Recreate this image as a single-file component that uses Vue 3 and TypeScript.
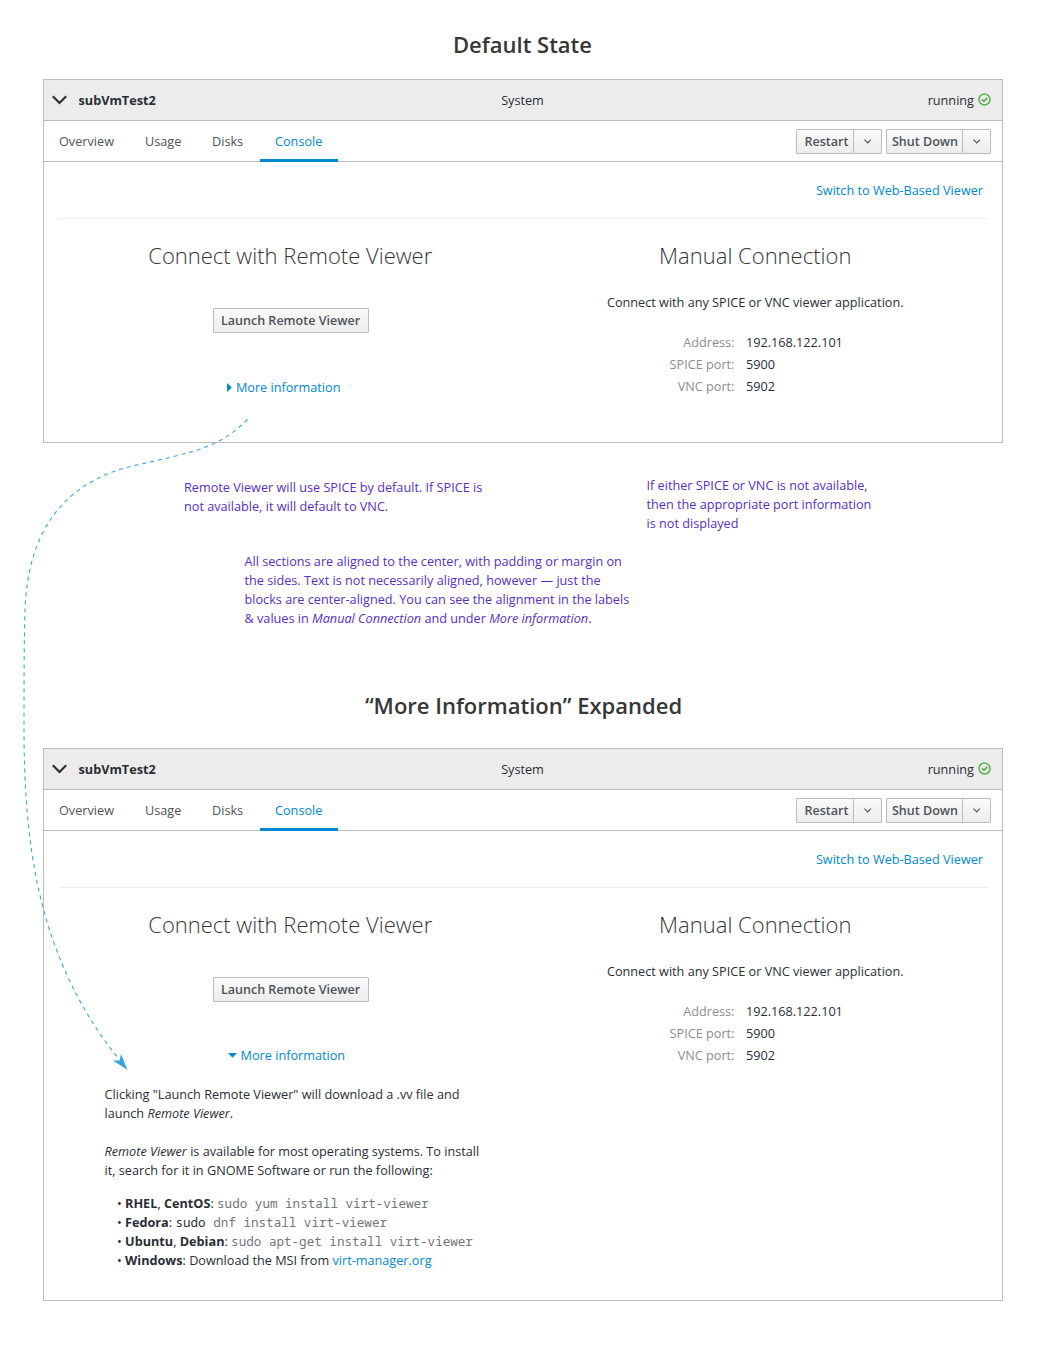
<script setup lang="ts">
interface VmPanel {
  id: string
  title: string
  expanded: boolean
}

const panels: VmPanel[] = [
  { id: 'default', title: 'Default State', expanded: false },
  { id: 'expanded', title: '“More Information” Expanded', expanded: true },
]

const tabs: string[] = ['Overview', 'Usage', 'Disks', 'Console']
const activeTab = 'Console'

const actions: string[] = ['Restart', 'Shut Down']

const connection: { label: string; value: string }[] = [
  { label: 'Address:', value: '192.168.122.101' },
  { label: 'SPICE port:', value: '5900' },
  { label: 'VNC port:', value: '5902' },
]
</script>

<template>
  <main class="page">
    <template v-for="panel in panels" :key="panel.id">
      <h1 class="state-title" :class="panel.id">{{ panel.title }}</h1>
      <section class="vm" :class="panel.id">
        <header class="vm-header">
          <div class="vm-name">
            <svg class="chevron" width="16" height="10" viewBox="0 0 16 10">
              <path d="M.8 1.300 7.500 8l6.700-6.700" fill="none" stroke="#292e34" stroke-width="2.1" />
            </svg>
            <strong>subVmTest2</strong>
          </div>
          <span class="vm-kind">System</span>
          <div class="vm-status">
            <span>running</span>
            <svg width="13" height="13" viewBox="0 0 13 13">
              <circle cx="6.5" cy="6.5" r="5.5" fill="none" stroke="#5cb050" stroke-width="1.5" />
              <path d="M3.9 6.3 5.9 8.3 9.2 5" fill="none" stroke="#5cb050" stroke-width="1.8" />
            </svg>
          </div>
        </header>

        <nav class="tabs">
          <a v-for="tab in tabs" :key="tab" class="tab" :class="['tab-' + tab.toLowerCase(), { active: tab === activeTab }]">{{ tab }}</a>
          <div class="actions">
            <div v-for="action in actions" :key="action" class="split">
              <button class="btn" :class="{ wide: action === 'Shut Down' }">{{ action }}</button>
              <button class="btn caret">
                <svg width="8" height="5" viewBox="0 0 8 5">
                  <path d="M.5.6 3.700 3.900 6.900.6" fill="none" stroke="#4d5258" stroke-width="1.1" />
                </svg>
              </button>
            </div>
          </div>
        </nav>

        <div class="console">
          <div class="switch"><a class="link">Switch to Web-Based Viewer</a></div>
          <div class="columns">
            <div class="column remote">
              <h2>Connect with Remote Viewer</h2>
              <button class="btn launch">Launch Remote Viewer</button>
              <a class="link more" :class="{ open: panel.expanded }">
                <svg v-if="panel.expanded" width="9" height="5" viewBox="0 0 9 5"><path d="M0 0h9L4.5 4.8z" fill="#0088ce" /></svg>
                <svg v-else width="5" height="9" viewBox="0 0 5 9"><path d="M0 0v9L4.8 4.5z" fill="#0088ce" /></svg>
                <span>More information</span>
              </a>
              <div v-if="panel.expanded" class="details">
                <p>Clicking "Launch Remote Viewer" will download a .vv file and<br />launch <em>Remote Viewer</em>.</p>
                <p><em>Remote Viewer</em> is available for most operating systems. To install<br />it, search for it in GNOME Software or run the following:</p>
                <ul>
                  <li><b>RHEL</b>, <b>CentOS</b>: <code>sudo yum install virt-viewer</code></li>
                  <li><b>Fedora</b>: <code><span class="dark">sudo</span> dnf install virt-viewer</code></li>
                  <li><b>Ubuntu</b>, <b>Debian</b>: <code>sudo apt-get install virt-viewer</code></li>
                  <li><b>Windows</b>: Download the MSI from <a class="link">virt-manager.org</a></li>
                </ul>
              </div>
            </div>
            <div class="column manual">
              <h2>Manual Connection</h2>
              <p class="hint">Connect with any SPICE or VNC viewer application.</p>
              <dl>
                <template v-for="row in connection" :key="row.label">
                  <dt>{{ row.label }}</dt>
                  <dd>{{ row.value }}</dd>
                </template>
              </dl>
            </div>
          </div>
        </div>
      </section>

      <aside v-if="!panel.expanded" class="notes">
        <div class="note-row">
          <p class="note-remote">Remote Viewer will use SPICE by default. If SPICE is<br />not available, it will default to VNC.</p>
          <p class="note-ports">If either SPICE or VNC is not available,<br />then the appropriate port information<br />is not displayed</p>
        </div>
        <p class="note-align">
          All sections are aligned to the center, with padding or margin on<br />the sides. Text is not necessarily aligned, however — just the<br />blocks are center-aligned. You can see the alignment in the labels<br />&amp; values in <em>Manual Connection</em> and under <em>More information</em>.
        </p>
      </aside>
    </template>

    <svg class="flow-arrow" width="140" height="1080" viewBox="0 0 140 1080">
      <path
        d="M247.500 419.500C237 430 226 438 214 443.500C190 455 150 461 121 469C64 487 28 530 25 610C24 640 24 690 24 730C24 800 30 860 43.500 909C58 965 85 1018 119 1059"
        fill="none" stroke="#39a5dc" stroke-width="1.1" stroke-dasharray="4 4"
      />
      <path d="M127.500 1070 113 1060.500 119.500 1060.500 121 1054z" fill="#39a5dc" />
    </svg>
  </main>
</template>

<style>
body {
  margin: 0;
  background: #fff;
}
</style>

<style scoped>
.page {
  position: relative;
  box-sizing: border-box;
  width: 1046px;
  height: 1353px;
  overflow: hidden;
  padding: 29px 43px 0;
  background: #fff;
  color: #292e34;
  font: 12.68px/19px 'Open Sans', sans-serif;
}
h1, h2, p, ul, dl, dd {
  margin: 0;
  padding: 0;
}
.state-title {
  height: 50px;
  font-size: 22px;
  line-height: 30px;
  font-weight: 600;
  color: #363636;
  text-align: center;
}
.state-title.default {
  padding-right: 1px;
}
.state-title.expanded {
  height: 58px;
  padding-left: 1px;
}
.vm {
  box-sizing: border-box;
  height: 364px;
  border: 1px solid #bbb;
}
.vm.expanded {
  height: 553px;
}
.vm-header {
  display: grid;
  grid-template-columns: 1fr auto 1fr;
  align-items: center;
  height: 40px;
  padding: 0 11px 0 8px;
  background: #ececec;
  border-bottom: 1px solid #bbb;
}
.vm-name {
  display: flex;
  align-items: center;
  gap: 10.500px;
}
.vm-kind {
  padding-left: 2px;
}
.vm-status {
  display: flex;
  align-items: center;
  justify-content: flex-end;
  gap: 4px;
}
.vm-status svg {
  margin-top: -2px;
}
.tabs {
  display: flex;
  height: 40px;
  border-bottom: 1px solid #bbb;
}
.tab {
  box-sizing: border-box;
  height: 41px;
  padding: 11px 0 0 15px;
  color: #4d5258;
}
.tab-overview {
  width: 86px;
}
.tab-usage {
  width: 67px;
}
.tab-disks {
  width: 63px;
}
.tab-console {
  width: 78px;
}
.tab.active {
  color: #0088ce;
  border-bottom: 3px solid #0088ce;
}
.actions {
  display: flex;
  gap: 4px;
  margin: 8px 11px 0 auto;
}
.split {
  display: flex;
}
.btn {
  box-sizing: border-box;
  height: 25px;
  padding: 0;
  border: 1px solid #bbb;
  border-radius: 1px;
  background: linear-gradient(#fafafa, #ededed);
  color: #4d5258;
  font: 600 12.55px/19px 'Open Sans', sans-serif;
}
.split .btn {
  width: 58px;
  padding-left: 3px;
  white-space: nowrap;
}
.split .btn.wide {
  width: 77px;
  padding-left: 1px;
}
.split .btn.caret {
  display: flex;
  align-items: center;
  justify-content: center;
  width: 29px;
  margin-left: -1px;
  padding: 0;
}
.link {
  color: #0088ce;
}
.console {
  padding: 0 14px 0 15px;
}
.switch {
  height: 57px;
  box-sizing: border-box;
  padding: 19px 5px 0 0;
  text-align: right;
  border-bottom: 1px solid #ededed;
}
.columns {
  display: flex;
}
.column {
  display: flex;
  flex: none;
  flex-direction: column;
  align-items: center;
  padding-top: 21px;
}
.remote {
  width: 463px;
}
.manual {
  width: 466px;
  padding-left: 0.250px;
}
h2 {
  font-size: 22px;
  line-height: 30px;
  font-weight: 300;
  color: #363636;
}
.remote h2 {
  margin-right: 0.500px;
}
.launch {
  width: 156px;
  margin-top: 38px;
}
.more {
  display: flex;
  align-items: center;
  gap: 4px;
  margin: 45px 13.700px 0 0;
}
.more.open {
  margin: 44px 8.300px 0 0;
}
.details {
  width: 372px;
  margin-top: 20px;
  white-space: nowrap;
}
.details p {
  margin-bottom: 19px;
}
.details ul {
  margin: -5px 0 0 12.500px;
  list-style: none;
}
.details li {
  height: 19px;
}
.details li::before {
  content: '• ';
}
code {
  font: 12.6px/18px 'Droid Sans Mono', 'Noto Sans Mono', 'DejaVu Sans Mono', monospace;
  color: #72767b;
}
.dark {
  color: #292e34;
}
.hint {
  margin-top: 23px;
}
dl {
  display: grid;
  grid-template-columns: auto auto;
  column-gap: 11.500px;
  margin: 19px 0 0 2px;
  line-height: 22px;
}
dt {
  text-align: right;
  color: #8b8d8f;
}
.notes {
  height: 247px;
  box-sizing: border-box;
  padding: 33px 0 0 141px;
  color: #582fc0;
}
.note-row {
  display: flex;
  height: 76px;
}
.note-remote {
  width: 462.500px;
  padding-top: 2px;
}
.note-align {
  margin-left: 60.500px;
}
.flow-arrow {
  position: absolute;
  left: 0;
  top: 0;
  overflow: visible;
  pointer-events: none;
}
</style>
